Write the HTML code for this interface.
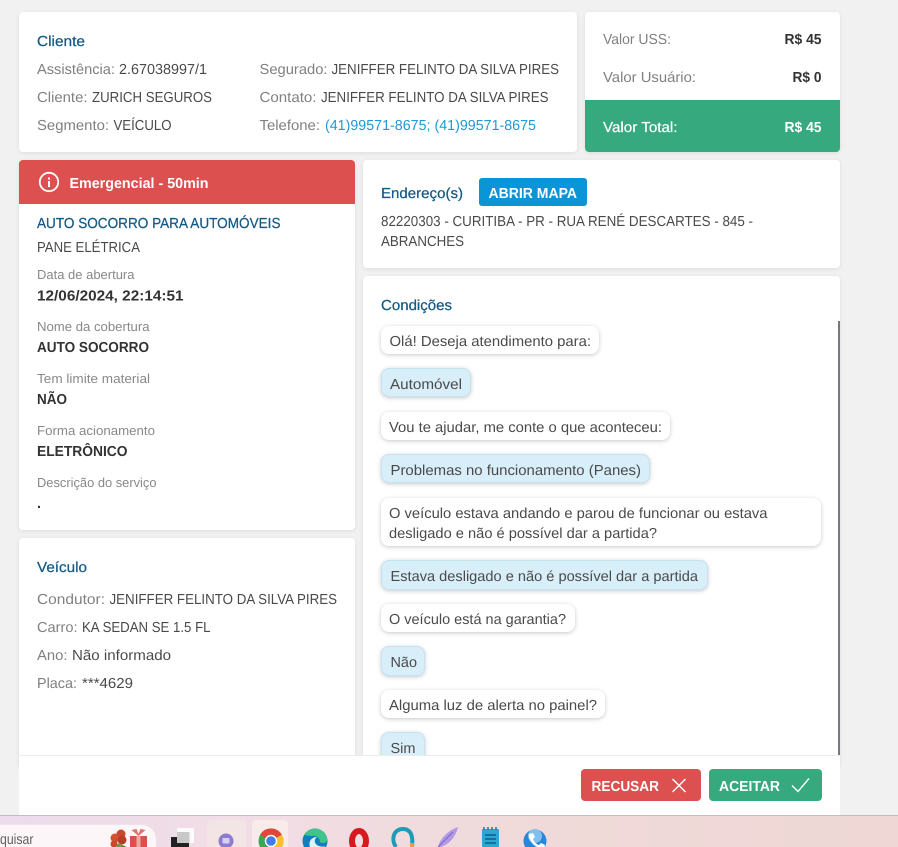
<!DOCTYPE html>
<html lang="pt-BR"><head><meta charset="utf-8"><title>Atendimento</title>
<style>
html,body{margin:0;padding:0;width:898px;height:847px;overflow:hidden;background:#f1f1f1}
#p{position:relative;width:898px;height:847px;overflow:hidden;contain:paint}
.a{position:absolute}
.c{position:absolute;background:#fff;border-radius:4px;box-shadow:0 1px 4px rgba(0,0,0,.09)}
.w{position:absolute;background:#fff;border-radius:8px;box-shadow:0 1px 4px rgba(0,0,0,.22);left:381px}
.b{position:absolute;background:#d8eef9;border:1px solid #c6e3f2;box-sizing:border-box;border-radius:8px;box-shadow:0 1px 4px rgba(0,0,0,.22);left:381px}
svg{position:absolute;left:0;top:0}
text{font-family:"Liberation Sans",sans-serif;font-size:14.5px;fill:#4a4a4a;text-rendering:geometricPrecision}
.g{fill:#808080}.h{fill:#135a85;stroke:#135a85;stroke-width:.25}.s{font-size:13px;fill:#888}.k{font-weight:700;fill:#333}.wt{fill:#fff;stroke:#fff;stroke-width:.2}.wb{fill:#fff;font-weight:700}.l{fill:#1f9ad6}
</style></head><body><div id="p">
<div class="c" style="left:19px;top:12px;width:558px;height:140px"></div>
<div class="c" style="left:585px;top:12px;width:255px;height:140px;overflow:hidden"><div class="a" style="left:0;top:88px;width:255px;height:52px;background:#36a97f"></div></div>
<div class="c" style="left:19px;top:160px;width:336px;height:370px;overflow:hidden"><div class="a" style="left:0;top:0;width:336px;height:44px;background:#dc5050"></div></div>
<div class="c" style="left:363px;top:160px;width:477px;height:108px"></div>
<div class="a" style="left:479px;top:178px;width:108px;height:28px;background:#0a95d6;border-radius:3px"></div>
<div class="c" style="left:363px;top:276px;width:477px;height:490px"></div>
<div class="a" style="left:838.4px;top:321px;width:1.6px;height:434px;background:#777782"></div>
<div class="c" style="left:19px;top:538px;width:336px;height:230px"></div>
<div class="w" style="top:326px;width:218px;height:28px"></div>
<div class="b" style="top:368px;width:90px;height:29px"></div>
<div class="w" style="top:412px;width:289px;height:28px"></div>
<div class="b" style="top:454px;width:269px;height:29px"></div>
<div class="w" style="top:498px;width:440px;height:48px"></div>
<div class="b" style="top:560px;width:327px;height:30px"></div>
<div class="w" style="top:604px;width:194px;height:28px"></div>
<div class="b" style="top:646px;width:44px;height:30px"></div>
<div class="w" style="top:690px;width:224px;height:28px"></div>
<div class="b" style="top:732px;width:44px;height:30px"></div>
<div class="a" style="left:19px;top:755px;width:821px;height:60px;background:#fff;border-top:1px solid #ececec;box-sizing:border-box"></div>
<div class="a" style="left:581px;top:769px;width:120px;height:32px;background:#dc5050;border-radius:4px"></div>
<div class="a" style="left:709px;top:769px;width:113px;height:32px;background:#36a97f;border-radius:4px"></div>
<div class="a" style="left:0;top:815px;width:898px;height:32px;background:linear-gradient(90deg,#ecdcec 0,#f1dde4 30%,#f0dad9 60%,#eed7d5 100%);border-top:1px solid #c8b8b8;box-sizing:border-box"></div>
<div class="a" style="left:-20px;top:824px;width:176px;height:23px;background:#fdf6f8;border-radius:15px 15px 0 0;border-top:1px solid #f0e2e8;box-sizing:border-box"></div>
<div class="a" style="left:207px;top:820px;width:39px;height:27px;background:#f3e4e6;border-radius:4px 4px 0 0"></div>
<div class="a" style="left:252px;top:820px;width:36px;height:27px;background:#f8ebe9;border-radius:4px 4px 0 0"></div>
<svg width="898" height="847" viewBox="0 0 898 847" xmlns="http://www.w3.org/2000/svg">
<text class="h" x="37" y="46" textLength="48" lengthAdjust="spacingAndGlyphs">Cliente</text>
<text class="g" x="37" y="74" textLength="78" lengthAdjust="spacingAndGlyphs">Assistência:</text>
<text x="119" y="74" textLength="88" lengthAdjust="spacingAndGlyphs">2.67038997/1</text>
<text class="g" x="37" y="102" textLength="50.5" lengthAdjust="spacingAndGlyphs">Cliente:</text>
<text x="92" y="102" textLength="120" lengthAdjust="spacingAndGlyphs">ZURICH SEGUROS</text>
<text class="g" x="37" y="130" textLength="72" lengthAdjust="spacingAndGlyphs">Segmento:</text>
<text x="113.5" y="130" textLength="58" lengthAdjust="spacingAndGlyphs">VEÍCULO</text>
<text class="g" x="259.5" y="74" textLength="68" lengthAdjust="spacingAndGlyphs">Segurado:</text>
<text x="331.5" y="74" textLength="227.5" lengthAdjust="spacingAndGlyphs">JENIFFER FELINTO DA SILVA PIRES</text>
<text class="g" x="259.5" y="102" textLength="57" lengthAdjust="spacingAndGlyphs">Contato:</text>
<text x="321" y="102" textLength="227.5" lengthAdjust="spacingAndGlyphs">JENIFFER FELINTO DA SILVA PIRES</text>
<text class="g" x="259.5" y="130" textLength="60.5" lengthAdjust="spacingAndGlyphs">Telefone:</text>
<text class="l" x="325" y="130" textLength="211" lengthAdjust="spacingAndGlyphs">(41)99571-8675; (41)99571-8675</text>
<text class="g" x="603" y="44" textLength="68" lengthAdjust="spacingAndGlyphs">Valor USS:</text>
<text class="k" x="784.5" y="44" textLength="37" lengthAdjust="spacingAndGlyphs">R$ 45</text>
<text class="g" x="603" y="82" textLength="93" lengthAdjust="spacingAndGlyphs">Valor Usuário:</text>
<text class="k" x="792.5" y="82" textLength="29" lengthAdjust="spacingAndGlyphs">R$ 0</text>
<text class="wt" x="603" y="132" textLength="74.5" lengthAdjust="spacingAndGlyphs">Valor Total:</text>
<text class="wb" x="784.5" y="132" textLength="37" lengthAdjust="spacingAndGlyphs">R$ 45</text>
<text class="wb" x="69.5" y="188" textLength="139" lengthAdjust="spacingAndGlyphs">Emergencial - 50min</text>
<text class="h" x="37" y="228" textLength="243.5" lengthAdjust="spacingAndGlyphs">AUTO SOCORRO PARA AUTOMÓVEIS</text>
<text x="37" y="252" textLength="103" lengthAdjust="spacingAndGlyphs">PANE ELÉTRICA</text>
<text class="s" x="37" y="279" textLength="97.5" lengthAdjust="spacingAndGlyphs">Data de abertura</text>
<text class="k" x="37" y="300.500" textLength="146.5" lengthAdjust="spacingAndGlyphs">12/06/2024, 22:14:51</text>
<text class="s" x="37" y="331" textLength="112.5" lengthAdjust="spacingAndGlyphs">Nome da cobertura</text>
<text class="k" x="37" y="352" textLength="112" lengthAdjust="spacingAndGlyphs">AUTO SOCORRO</text>
<text class="s" x="37" y="383" textLength="113" lengthAdjust="spacingAndGlyphs">Tem limite material</text>
<text class="k" x="37" y="404" textLength="30" lengthAdjust="spacingAndGlyphs">NÃO</text>
<text class="s" x="37" y="435" textLength="118" lengthAdjust="spacingAndGlyphs">Forma acionamento</text>
<text class="k" x="37" y="456" textLength="90.5" lengthAdjust="spacingAndGlyphs">ELETRÔNICO</text>
<text class="s" x="37" y="487" textLength="119.5" lengthAdjust="spacingAndGlyphs">Descrição do serviço</text>
<text class="k" x="37" y="508">.</text>
<text class="h" x="37" y="572" textLength="50" lengthAdjust="spacingAndGlyphs">Veículo</text>
<text class="g" x="37" y="604" textLength="68" lengthAdjust="spacingAndGlyphs">Condutor:</text>
<text x="109.5" y="604" textLength="227.5" lengthAdjust="spacingAndGlyphs">JENIFFER FELINTO DA SILVA PIRES</text>
<text class="g" x="37" y="632" textLength="40.5" lengthAdjust="spacingAndGlyphs">Carro:</text>
<text x="82" y="632" textLength="128.5" lengthAdjust="spacingAndGlyphs">KA SEDAN SE 1.5 FL</text>
<text class="g" x="37" y="660" textLength="30.5" lengthAdjust="spacingAndGlyphs">Ano:</text>
<text x="72" y="660" textLength="99" lengthAdjust="spacingAndGlyphs">Não informado</text>
<text class="g" x="37" y="688" textLength="40" lengthAdjust="spacingAndGlyphs">Placa:</text>
<text x="82" y="688" textLength="51" lengthAdjust="spacingAndGlyphs">***4629</text>
<text class="h" x="381" y="198" textLength="82" lengthAdjust="spacingAndGlyphs">Endereço(s)</text>
<text class="wb" x="488.5" y="198" textLength="88.5" lengthAdjust="spacingAndGlyphs">ABRIR MAPA</text>
<text x="381" y="226" textLength="372" lengthAdjust="spacingAndGlyphs">82220303 - CURITIBA - PR - RUA RENÉ DESCARTES - 845 -</text>
<text x="381" y="246" textLength="83" lengthAdjust="spacingAndGlyphs">ABRANCHES</text>
<text class="h" x="381" y="310" textLength="71" lengthAdjust="spacingAndGlyphs">Condições</text>
<text x="389.5" y="346" textLength="201.5" lengthAdjust="spacingAndGlyphs">Olá! Deseja atendimento para:</text>
<text x="390" y="389" textLength="72" lengthAdjust="spacingAndGlyphs">Automóvel</text>
<text x="389" y="432" textLength="273" lengthAdjust="spacingAndGlyphs">Vou te ajudar, me conte o que aconteceu:</text>
<text x="390.5" y="475" textLength="250.5" lengthAdjust="spacingAndGlyphs">Problemas no funcionamento (Panes)</text>
<text x="389" y="518" textLength="378.5" lengthAdjust="spacingAndGlyphs">O veículo estava andando e parou de funcionar ou estava</text>
<text x="389" y="538" textLength="268" lengthAdjust="spacingAndGlyphs">desligado e não é possível dar a partida?</text>
<text x="390.5" y="581" textLength="307.5" lengthAdjust="spacingAndGlyphs">Estava desligado e não é possível dar a partida</text>
<text x="389" y="624" textLength="177" lengthAdjust="spacingAndGlyphs">O veículo está na garantia?</text>
<text x="390.5" y="667" textLength="26.5" lengthAdjust="spacingAndGlyphs">Não</text>
<text x="389" y="710" textLength="208" lengthAdjust="spacingAndGlyphs">Alguma luz de alerta no painel?</text>
<text x="390.5" y="753" textLength="25" lengthAdjust="spacingAndGlyphs">Sim</text>
<text class="wb" x="591.5" y="791" textLength="67.5" lengthAdjust="spacingAndGlyphs">RECUSAR</text>
<text class="wb" x="719" y="791" textLength="61" lengthAdjust="spacingAndGlyphs">ACEITAR</text>
<text x="0" y="844" textLength="33.500" lengthAdjust="spacingAndGlyphs" style="font-size:14.5px;fill:#606060">quisar</text>
<circle cx="49" cy="182" r="9.2" fill="none" stroke="#fff" stroke-width="1.8"/>
<rect x="48" y="181" width="2" height="6" fill="#fff"/><rect x="48" y="177.5" width="2" height="2" fill="#fff"/>
<path d="M672.500 779L685.500 792M685.500 779L672.500 792" stroke="#fff" stroke-width="1.500" fill="none"/>
<path d="M792 785.500L798 791.500L809 778.500" stroke="#fff" stroke-width="1.400" fill="none"/>
<!-- taskbar icons -->
<circle cx="121" cy="834" r="4.500" fill="#c9472c"/><circle cx="115" cy="838" r="4.500" fill="#d2512f"/><circle cx="122" cy="840" r="4.500" fill="#b83c26"/><circle cx="114" cy="844" r="3.500" fill="#c9472c"/><path d="M120 844l7 3h-9z" fill="#5d8a3f"/><circle cx="119" cy="846" r="2.500" fill="#6d9a4a"/>
<path d="M130 836h17v11h-17z" fill="#d9504e"/><path d="M136.500 836h4v11h-4z" fill="#f0a9a0"/><path d="M138.500 836l-7-6 5-1 2 5 2-5 5 1-7 6z" fill="#e4706a"/>
<rect x="177" y="828" width="17" height="15" fill="#fbfbfb"/><rect x="177" y="832" width="12.500" height="11" fill="#c8c8c8"/>
<path d="M171 837h6v6h12v4h-18z" fill="#222"/>
<circle cx="226" cy="841" r="7.500" fill="#8d7bd0"/><rect x="221" y="844" width="9" height="3" fill="#8d7bd0"/><rect x="222.500" y="838" width="7" height="5.500" rx="1" fill="#d8d0f2"/>
<circle cx="271" cy="841" r="12.500" fill="#3aa757"/><path d="M271 841L260.200 834.700A12.500 12.500 0 0 1 281.800 834.700Z" fill="#e2463a"/><path d="M271 841L281.800 834.700A12.500 12.500 0 0 1 270 853.500Z" fill="#fbc02d"/><circle cx="271" cy="841" r="6.200" fill="#fff"/><circle cx="271" cy="841" r="4.800" fill="#3f7de8"/>
<circle cx="315" cy="841" r="12.500" fill="#0f7fc0"/><path d="M304 835a12.500 12.500 0 0 1 23 3c1 5-4 6-7 4 0-5-5-7-9-6z" fill="#3fc58a"/><path d="M310 847c-2-6 2-10 7-10-3 2-3 6 0 8 3 2 6 2 8 1-4 5-12 5-15 1z" fill="#dff3f5"/>
<ellipse cx="359" cy="841" rx="7" ry="10" fill="none" stroke="#d7191f" stroke-width="6"/>
<path d="M396 847c-5-7-3-18 7-18 9 0 10 9 9 18" fill="none" stroke="#1f9bb5" stroke-width="4"/><rect x="410" y="843" width="4" height="4" fill="#ef9a3c"/>
<path d="M438 847c2-9 11-17 20-20-2 9-8 17-17 20z" fill="#b39ae6"/><path d="M438 847l15-15" stroke="#7d5fc9" stroke-width="1"/>
<rect x="482" y="829" width="17" height="18" rx="1" fill="#2ea6d4"/><path d="M485 835h11M485 839h11M485 843h11" stroke="#0f5f86" stroke-width="1.500"/><path d="M484 827v3M488 827v3M492 827v3M496 827v3" stroke="#1c7ea8" stroke-width="1.500"/>
<circle cx="535" cy="841" r="11.500" fill="#2a86d8"/><circle cx="535" cy="836" r="7" fill="#7fc0ee"/><path d="M529 834l4-1 2 4-2 2c1 3 3 5 6 6l2-2 4 2-1 4c-8 0-16-8-15-15z" fill="#fff"/>
</svg>
</div></body></html>
